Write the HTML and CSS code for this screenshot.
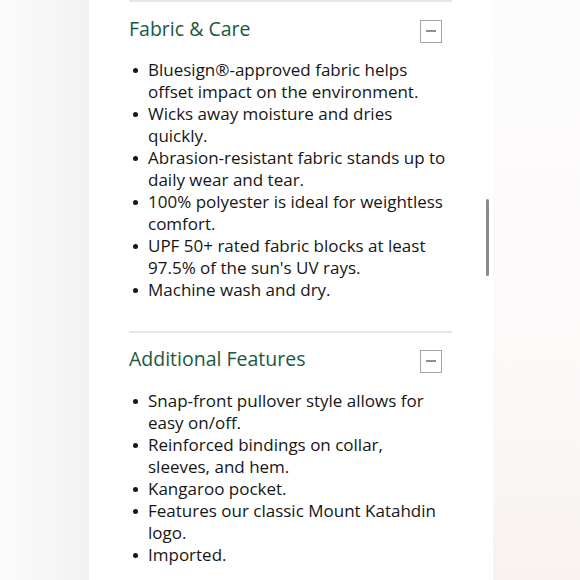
FILE: index.html
```html
<!DOCTYPE html>
<html lang="en">
<head>
<meta charset="utf-8">
<title>Fabric &amp; Care</title>
<link rel="stylesheet" href="styles.css">
</head>
<body>
<div class="stage">
  <div class="side side-left"></div>
  <main class="panel">
    <section class="section">
      <div class="section-head">
        <h2 class="section-title">Fabric &amp; Care</h2>
        <span class="toggle"><span class="toggle-bar"></span></span>
      </div>
      <ul class="list">
        <li>Bluesign®-approved fabric helps offset impact on the environment.</li>
        <li>Wicks away moisture and dries quickly.</li>
        <li>Abrasion-resistant fabric stands up to daily wear and tear.</li>
        <li>100% polyester is ideal for weightless comfort.</li>
        <li>UPF 50+ rated fabric blocks at least 97.5% of the sun's UV rays.</li>
        <li>Machine wash and dry.</li>
      </ul>
    </section>
    <section class="section">
      <div class="section-head">
        <h2 class="section-title">Additional Features</h2>
        <span class="toggle"><span class="toggle-bar"></span></span>
      </div>
      <ul class="list">
        <li>Snap-front pullover style allows for easy on/off.</li>
        <li>Reinforced bindings on collar, sleeves, and hem.</li>
        <li>Kangaroo pocket.</li>
        <li>Features our classic Mount Katahdin logo.</li>
        <li>Imported.</li>
      </ul>
    </section>
    <div class="scrollbar"></div>
  </main>
  <div class="side side-right"></div>
</div>
</body>
</html>
```
FILE: styles.css
```css
* { box-sizing: border-box; }
html, body { margin: 0; padding: 0; }
body {
  width: 580px;
  height: 580px;
  overflow: hidden;
  font-family: "Open Sans", "Liberation Sans", sans-serif;
  color: #161616;
  background: #fbfafa;
}
.stage {
  display: flex;
  height: 580px;
}
.side-left {
  width: 89px;
  flex: none;
  background: linear-gradient(to right, #fbfbfb 0%, #f6f6f6 60%, #f1f1f1 100%);
}
.side-right {
  flex: 1;
  background: linear-gradient(to bottom, #fdfcfc 0%, #fbf8f8 70%, #f8f2f1 100%);
}
.panel {
  position: relative;
  width: 404px;
  flex: none;
  background: #ffffff;
  padding: 0 41px 0 40px;
}
.section {
  border-top: 2px solid #e6e6e6;
  padding-top: 17px;
  padding-bottom: 30px;
}
.section + .section { padding-top: 16px; }
.section-head {
  display: flex;
  justify-content: space-between;
  align-items: center;
  height: 24px;
}
.section-title {
  margin: 0;
  padding-bottom: 4px;
  font-size: 19.5px;
  font-weight: 400;
  line-height: 24px;
  color: #1b5842;
}
.toggle {
  width: 22px;
  height: 23px;
  margin-right: 10px;
  border: 1.5px solid #a4a4a4;
  display: flex;
  align-items: center;
  justify-content: center;
}
.toggle-bar {
  width: 10px;
  height: 2px;
  background: #8e8e8e;
}
.list {
  list-style: none;
  margin: 16px 0 0;
  padding: 0 4px 0 0;
  font-size: 17px;
  line-height: 22px;
}
.section + .section .list { margin-top: 17px; }
.list li {
  display: flex;
}
.list li::before {
  content: "";
  flex: none;
  width: 5px;
  height: 5px;
  border-radius: 50%;
  background: #161616;
  margin: 9px 10px 0 4px;
}
.scrollbar {
  position: absolute;
  left: 397px;
  top: 199px;
  width: 3px;
  height: 77px;
  border-radius: 2px;
  background: #8a8a8a;
}
```
